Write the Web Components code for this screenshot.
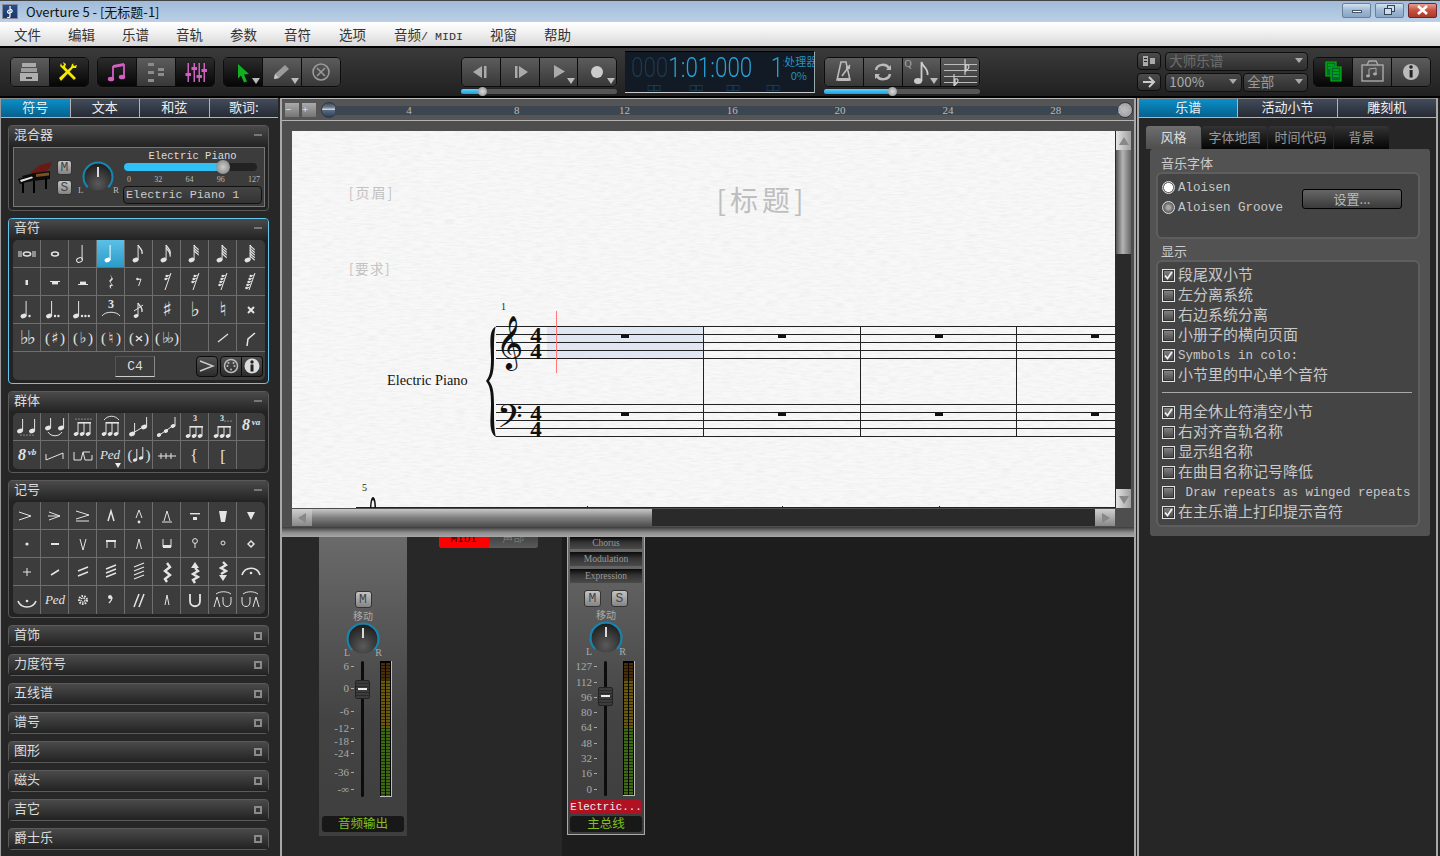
<!DOCTYPE html>
<html>
<head>
<meta charset="utf-8">
<title>Overture 5</title>
<style>
html, body { margin: 0; height: 100%; background: #262626; overflow: hidden; }
body { font-family: "Noto Sans CJK SC", "Noto Sans", sans-serif; }
</style>
</head>
<body>
<ov-app></ov-app>
<script>
(function() {
    "use strict";

    const CJK = '"Noto Sans CJK SC", "Noto Sans", sans-serif';
    const MONO = '"Liberation Mono", "Noto Sans CJK SC", monospace';
    const SERIF = '"Liberation Serif", "Noto Sans CJK SC", serif';
    const MUSIC = '"DejaVu Sans", sans-serif';

    const svg = (w, h, inner, vb) => `<svg xmlns="http://www.w3.org/2000/svg" width="${w}" height="${h}" viewBox="${vb || `0 0 ${w} ${h}`}" style="display:block">${inner}</svg>`;
    const ln = (a, b, c, d, w, col) => `<line x1="${a}" y1="${b}" x2="${c}" y2="${d}" stroke="${col || 'currentColor'}" stroke-width="${w || 1}"/>`;
    const pl = (pts, w) => `<polyline points="${pts}" fill="none" stroke="currentColor" stroke-width="${w || 1}"/>`;
    const pg = (pts, col) => `<polygon points="${pts}" fill="${col || 'currentColor'}"/>`;
    const rc = (x, y, w, h, col) => `<rect x="${x}" y="${y}" width="${w}" height="${h}" fill="${col || 'currentColor'}"/>`;
    const tx = (s, x, y, size, fam, extra) => `<text x="${x}" y="${y}" font-size="${size}" font-family='${fam || MUSIC}' fill="currentColor" text-anchor="middle" ${extra || ''}>${s}</text>`;

    // a note head with stem and flags, all palette symbols are built from this
    function note(o) {
        const x = o.x === undefined ? 10.5 : o.x, y = o.y === undefined ? 20 : o.y, h = o.h || 15;
        const rx = o.rx || 3, ry = o.ry || 2.2;
        let s = o.open
            ? `<ellipse cx="${x}" cy="${y}" rx="${rx}" ry="${ry}" transform="rotate(-20 ${x} ${y})" fill="none" stroke="currentColor"/>`
            : `<ellipse cx="${x}" cy="${y}" rx="${rx}" ry="${ry}" transform="rotate(-20 ${x} ${y})" fill="currentColor"/>`;
        if (!o.nostem) s += ln(x + rx - .4, y, x + rx - .4, y - h, 1);
        for (let i = 0; i < (o.flags || 0); i++) {
            const fy = y - h + i * 2.6, sx = x + rx - .4;
            s += `<path d="M${sx} ${fy}c1 3 5 4 4 ${o.flags > 2 ? 5 : 9}" fill="none" stroke="currentColor" stroke-width="1.2"/>`;
        }
        for (let i = 0; i < (o.dots || 0); i++) s += `<circle cx="${x + 6 + i * 3.4}" cy="${y}" r="1.2" fill="currentColor"/>`;
        return s;
    }
    const restFlag = n => {
        const sx = y => 18 - (y - 5) * 6 / 17;
        let s = ln(18, 5, 12, 22, 1);
        for (let i = 0; i < n; i++) {
            const y = 8 + i * 3;
            s += `<circle cx="${sx(y) - 3.2}" cy="${y}" r="1.3" fill="currentColor"/>` + ln(sx(y) - 3, y + .4, sx(y), y - 1, 1);
        }
        return s;
    };
    const paren = (inner, x1, x2) => tx('(', x1 || 6.5, 19, 15, SERIF) + inner + tx(')', x2 || 21.5, 19, 15, SERIF);
    const acc = (g, x, y, size) => tx(g, x || 14, y || 20, size || 20);
    const ff = (size, x, y) => tx('♭♭', x || 14, y || 20, size, MUSIC, 'letter-spacing="-2"');
    const beams = (xs, y, h, extra) => xs.map(x => note({ x: x, y: y, h: h, rx: 2.4, ry: 1.8 })).join('') + rc(xs[0] + 2, y - h, xs[xs.length - 1] - xs[0] + 1, 1.6) + (extra || '');
    const dotted = (x1, x2, y) => { let s = ''; for (let x = x1; x <= x2; x += 3) s += `<circle cx="${x}" cy="${y}" r=".6" fill="currentColor"/>`; return s; };

    const NOTES = [
        ln(6, 11, 6, 17) + ln(8, 11, 8, 17) + ln(20, 11, 20, 17) + ln(22, 11, 22, 17) + `<ellipse cx="14" cy="14" rx="3.6" ry="2" fill="none" stroke="currentColor" stroke-width="1.5"/>`,
        `<ellipse cx="14" cy="14" rx="3.4" ry="2" fill="none" stroke="currentColor" stroke-width="1.6"/>`,
        note({ open: 1 }), note({}), note({ flags: 1 }), note({ flags: 2 }), note({ flags: 3 }), note({ flags: 4 }), note({ flags: 5 }),
        rc(12.5, 12, 2.5, 5), rc(9, 13, 10, 1) + rc(11, 14, 6, 2.4), rc(9, 16, 10, 1) + rc(11, 13.6, 6, 2.4),
        `<path d="M13 6l3 5-2.6 3 3 4c-2-.6-3.4 0-2 3-3-2-2-5 .4-4l-2.6-4 2.4-3z" fill="currentColor"/>`,
        `<circle cx="12.4" cy="11" r="1.2" fill="currentColor"/>` + ln(12.4, 11.6, 16, 11, 1) + ln(16, 11, 13.6, 18, 1),
        restFlag(2), restFlag(3), restFlag(4), restFlag(5),
        note({ dots: 1 }), note({ x: 8, dots: 2 }), note({ x: 7, dots: 3 }),
        tx('3', 14, 12, 12, SERIF, 'font-weight="bold"') + `<path d="M5 20c3-5 15-5 18 0" fill="none" stroke="currentColor"/>`,
        note({ x: 11, y: 20, h: 13, rx: 2.4, ry: 1.8, flags: 1 }) + ln(9, 15, 18, 9),
        acc('♯'), acc('♭'), acc('♮'),
        ln(11, 11, 17, 17, 2) + ln(17, 11, 11, 17, 2),
        ff(19), paren(acc('♯', 14, 19, 15)), paren(acc('♭', 14, 19, 15)), paren(acc('♮', 14, 19, 15)),
        paren(ln(11, 12, 17, 17, 1.5) + ln(17, 12, 11, 17, 1.5)), tx('(', 4.5, 19, 15, SERIF) + ff(15, 14, 19) + tx(')', 23.5, 19, 15, SERIF), '',
        ln(9, 18, 19, 10, 1.3),
        `<path d="M10 22l1-7 7-6" fill="none" stroke="currentColor" stroke-width="1.5"/>`,
    ];
    const GROUPS = [
        note({ x: 7, y: 18, h: 12 }) + note({ x: 19, y: 18, h: 12 }) + dotted(8, 20, 22),
        note({ x: 7, y: 15, h: 10 }) + note({ x: 20, y: 15, h: 10 }) + `<path d="M7 19c3 5 11 5 14 0" fill="none" stroke="currentColor"/>`,
        beams([7, 13, 19], 21, 12) + dotted(7, 22, 6),
        beams([7, 13, 19], 21, 12) + `<path d="M7 7c4-5 11-5 15 0" fill="none" stroke="currentColor"/>`,
        note({ x: 7, y: 21, h: 11 }) + note({ x: 19, y: 14, h: 10 }) + ln(8, 20, 18, 14),
        note({ x: 6, y: 22, h: 6, rx: 2.2, ry: 1.8, nostem: 1 }) + note({ x: 13, y: 18, h: 6, rx: 2.2, ry: 1.8, nostem: 1 }) + note({ x: 20, y: 13, h: 9, rx: 2.4, ry: 1.8 }) + ln(5, 23, 21, 12),
        tx('3', 14, 8, 8, SERIF, 'font-weight="bold"') + beams([7, 13, 19], 23, 10),
        tx('3', 13, 8, 8, SERIF, 'font-weight="bold"') + dotted(16, 22, 8) + beams([7, 13, 19], 23, 10),
        tx('8', 9, 17, 16, SERIF, 'font-weight="bold" font-style="italic"') + tx('va', 19, 12, 9, SERIF, 'font-weight="bold" font-style="italic"'),
        tx('8', 9, 19, 16, SERIF, 'font-weight="bold" font-style="italic"') + tx('vb', 19, 14, 9, SERIF, 'font-weight="bold" font-style="italic"'),
        pl('5,13 5,19 22,12 22,18'),
        pl('5,11 5,19 12,19 14,11 21,11') + pl('14,11 16,19 23,19 23,14'),
        tx('Ped', 13, 18, 13, SERIF, 'font-style="italic"') + pg('18,22 24,22 21,27', '#eee'),
        paren(note({ x: 10, y: 19, h: 11, rx: 2.2, ry: 1.7 }) + note({ x: 16, y: 17, h: 11, rx: 2.2, ry: 1.7 }), 5, 23),
        pl('5,15 23,15') + pl('8,12 8,18') + pl('13,12 13,18') + pl('18,12 18,18'),
        tx('{', 13, 20, 16, SERIF), tx('[', 14, 21, 16, SERIF), '',
    ];
    const MARKS = [
        pl('6,10 18,14 6,18'),
        pl('8,10 19,14 8,18') + ln(7, 14, 19, 14),
        pl('7,9 20,13 7,17') + ln(7, 19, 20, 19),
        pl('11,19 14,9 17,19', 1.5),
        pl('11,16 14,8 17,16') + `<circle cx="14" cy="20" r="1.4" fill="currentColor"/>`,
        pl('11,19 14,9 17,19', 1) + ln(9, 20, 19, 20),
        rc(9, 11, 10, 1.4) + rc(12, 15, 4, 3),
        pg('10,9 18,9 16,20 12,20'),
        pg('10,10 18,10 14,18'),
        `<circle cx="14" cy="14" r="1.6" fill="currentColor"/>`,
        rc(10, 13, 8, 2),
        pl('11,9 14,20 17,9'),
        rc(9, 10, 10, 2) + pl('10,12 10,18') + pl('18,12 18,18') + rc(9, 10, 10, 2),
        pl('11.5,19 14,9 16.5,19'),
        pl('10,9 10,17 18,17 18,9') + rc(10, 15, 8, 3),
        `<circle cx="14" cy="11" r="2.4" fill="none" stroke="currentColor"/>` + ln(14, 13, 14, 18),
        `<circle cx="14" cy="13" r="2" fill="none" stroke="currentColor"/>`,
        pg('14,10 18,14 14,18 10,14') + pg('14,12 16,14 14,16 12,14', '#3c3c3c'),
        ln(10, 14, 18, 14) + ln(14, 10, 14, 18),
        ln(10, 17, 18, 12, 1.5),
        ln(9, 13, 19, 9, 1.5) + ln(9, 18, 19, 14, 1.5),
        ln(9, 11, 19, 7, 1.4) + ln(9, 15, 19, 11, 1.4) + ln(9, 19, 19, 15, 1.4),
        ln(9, 9, 19, 5, 1.3) + ln(9, 13, 19, 9, 1.3) + ln(9, 17, 19, 13, 1.3) + ln(9, 21, 19, 17, 1.3),
        pl('14,5 17,9 12,13 17,17 12,21 14,24', 2.4),
        pg('14,4 18,10 10,10') + pl('14,10 17,13 12,16 17,19 12,22 14,25', 2.4),
        pl('14,4 17,7 12,10 17,13 12,16', 2.4) + pg('14,23 18,17 10,17'),
        `<path d="M5 17c3-9 15-9 18 0" fill="none" stroke="currentColor" stroke-width="1.6"/><circle cx="14" cy="15" r="1.3" fill="currentColor"/>`,
        `<path d="M5 15c3 8 15 8 18 0" fill="none" stroke="currentColor" stroke-width="1.6"/><circle cx="14" cy="15" r="1.3" fill="currentColor"/>`,
        tx('Ped', 14, 18, 13, SERIF, 'font-style="italic"'),
        `<circle cx="14" cy="14" r="2" fill="none" stroke="currentColor" stroke-width="1.4" stroke-dasharray="1.4 .8"/><circle cx="14" cy="14" r="4" fill="none" stroke="currentColor" stroke-width="2" stroke-dasharray="1.6 1.2"/>`,
        `<circle cx="13" cy="11" r="2" fill="currentColor"/><path d="M15 11c0 4-2 5-3 6" fill="none" stroke="currentColor" stroke-width="1.4"/>`,
        ln(9, 21, 14, 8, 1.5) + ln(14, 21, 19, 8, 1.5),
        pl('12,19 14,9 16,19'),
        `<path d="M9 8v7c0 7 10 7 10 0V8" fill="none" stroke="currentColor" stroke-width="1.8"/>`,
        pl('5,21 8,11 11,21') + `<path d="M14 11v5c0 6 8 6 8 0v-5" fill="none" stroke="currentColor"/><path d="M7 8c4-3 11-3 15 0" fill="none" stroke="currentColor"/>`,
        `<path d="M5 11v5c0 6 8 6 8 0v-5" fill="none" stroke="currentColor"/>` + pl('16,21 19,11 22,21') + `<path d="M6 8c4-3 11-3 15 0" fill="none" stroke="currentColor"/>`,
    ];

    const TOOL = {
        tray: `<rect x="11" y="6" width="14" height="4" fill="#aaa"/><rect x="10" y="11" width="16" height="4" fill="#9c9c9c"/><rect x="9" y="16" width="18" height="8" fill="#b0b0b0"/><rect x="15" y="20" width="6" height="2" fill="#444"/>`,
        tools: `<path d="M11 6l-1 3 3 3 11 11 2-2L15 10l1-3-3-2 1 3-2 1z" fill="#f5e800"/><path d="M26 6l-4 1-1 3-12 11 2 3 12-13 3 0 1-3-3 1-1-2z" fill="#f5e800"/>`,
        music: `<path d="M15 9v13M26 7v12" stroke="#d460c4" stroke-width="1.800"/><path d="M15 8l11-2v3l-11 2z" fill="#d460c4"/><ellipse cx="13" cy="22" rx="3.200" ry="2.300" fill="#d460c4"/><ellipse cx="24" cy="20" rx="3.200" ry="2.300" fill="#d460c4"/>`,
        blocks: `<rect x="11" y="6" width="6" height="3" fill="#8c8c8c"/><rect x="11" y="14" width="6" height="3" fill="#8c8c8c"/><rect x="11" y="22" width="6" height="3" fill="#8c8c8c"/><rect x="21" y="11" width="6" height="3" fill="#8c8c8c"/><rect x="21" y="16" width="6" height="3" fill="#8c8c8c"/>`,
        faders: [12, 18, 23, 28].map((x, i) => `<rect x="${x - .5}" y="6" width="1.500" height="19" fill="#d060c0"/><rect x="${x - 2.500}" y="${[16, 10, 18, 12][i]}" width="5.500" height="3" fill="#d060c0"/>`).join(''),
        arrow: `<path d="M14 7l11 10-5 .5 3 7-3 1-3-7-3 3z" fill="#10b020"/>`,
        pencil: `<path d="M11 22l1-5 10-9 4 4-10 9z" fill="#9a9a9a"/><path d="M11 22l1-5 4 4z" fill="#c8c8c8"/>`,
        cross: `<circle cx="19" cy="15" r="8" fill="none" stroke="#9a9a9a" stroke-width="1.6"/><path d="M15 11l8 8M23 11l-8 8" stroke="#9a9a9a" stroke-width="1.6"/>`,
        prev: `<path d="M20 9v12l-9-6z" fill="#aaa"/><rect x="22" y="9" width="2.5" height="12" fill="#aaa"/>`,
        next: `<rect x="14" y="9" width="2.5" height="12" fill="#aaa"/><path d="M18 9v12l9-6z" fill="#aaa"/>`,
        play: `<path d="M14 8v13l11-6.500z" fill="#aaa"/>`,
        rec: `<circle cx="19" cy="15" r="6" fill="#ccc"/>`,
        metro: `<path d="M16 5h5l4 18H12z" fill="none" stroke="#bbb" stroke-width="1.600"/><path d="M13 21h11v3H13z" fill="#bbb"/><path d="M17 19l8-11" stroke="#bbb" stroke-width="1.600"/><rect x="21" y="9" width="4" height="3" fill="#bbb"/>`,
        loop: `<path d="M12 13c1-6 10-7 13-2M26 17c-1 6-10 7-13 2" fill="none" stroke="#bbb" stroke-width="2.500"/><path d="M22 13l5 0 0-5zM16 17l-5 0 0 5z" fill="#bbb"/>`,
        qnote: `<ellipse cx="15" cy="24" rx="4" ry="3" fill="#ccc"/><path d="M18.500 24V5c1 5 7 6 6 13" fill="none" stroke="#ccc" stroke-width="1.800"/>`,
        staff: [7, 13, 19, 25].map(y => `<rect x="3" y="${y}" width="33" height="1" fill="#bbb"/>`).join('') + `<path d="M24 2v16M25 8c4-1 4 3 0 6zM13 17v12M14 22c4-1 4 3 0 6z" fill="none" stroke="#ccc" stroke-width="1.200"/>`,
        green: `<path d="M12 5h10v14H12z" fill="#063" stroke="#0b0" stroke-width="1.200"/><path d="M17 10h10v14H17z" fill="#063" stroke="#0b0" stroke-width="1.200"/><path d="M14 8h6M14 11h2M19 13h6M19 16h6M19 19h6" stroke="#0d0" stroke-width="1.200"/>`,
        bag: `<rect x="9" y="8" width="21" height="16" fill="none" stroke="#aaa" stroke-width="1.400"/><path d="M14 8l2-4h7l2 4" fill="none" stroke="#aaa" stroke-width="1.400"/><path d="M16 19v-7l7-1v6" fill="none" stroke="#aaa"/><ellipse cx="15" cy="19" rx="2" ry="1.400" fill="#aaa"/><ellipse cx="22" cy="17" rx="2" ry="1.400" fill="#aaa"/>`,
        info: `<circle cx="19" cy="15" r="8" fill="#bbb"/><rect x="17.600" y="13" width="3" height="7.500" fill="#222"/><circle cx="19" cy="10" r="1.800" fill="#222"/>`,
    };

    const define = (name, cls) => window.customElements.define(name, cls);

    class OvElement extends HTMLElement {
        constructor() {
            super();
            this.attachShadow({mode: 'open'});
        }
        connectedCallback() {
            this.shadowRoot.innerHTML = this.render();
        }
        attr(name, dflt) {
            return this.hasAttribute(name) ? this.getAttribute(name) : dflt;
        }
    }

    define('ov-titlebar', class extends OvElement {
        render() {
            const wb = (bg, inner, border) => `<div class="wb" style="background:${bg};border-color:${border}">${inner}</div>`;
            return `<style>
                :host { display: flex; align-items: center; height: 22px; box-sizing: border-box; border-top: 1px solid #444;
                    background: linear-gradient(#9fbbd9, #bcd0e6); font: 13px ${CJK}; color: #111; }
                .logo { width: 16px; height: 15px; margin: 0 8px 0 2px; background: linear-gradient(#27508c, #1a3668); color: #fff; border: 1px solid #889; box-sizing: border-box; }
                .t { flex: 1; white-space: pre; }
                .btns { display: flex; gap: 4px; margin-right: 3px; margin-top: -3px; }
                .wb { width: 29px; height: 15px; box-sizing: border-box; border: 1px solid; border-radius: 2px; display: flex; align-items: center; justify-content: center; }
            </style>
            <div class="logo">${svg(14, 13, '<path d="M7 1v10c0 2-2 2-2.500 1M7 4c3 1 3 3 0 4-3 1-3-2-1-3" fill="none" stroke="#fff" stroke-width="1.200"/>')}</div>
            <div class="t">Overture 5 - [无标题-1]</div>
            <div class="btns">
                ${wb('linear-gradient(#d4e2f0,#9fb9d4 50%,#8aa6c4)', '<div style="width:10px;height:3px;background:#fff;border:1px solid #456;box-sizing:border-box;margin-top:3px"></div>', '#6d7f94')}
                ${wb('linear-gradient(#d4e2f0,#9fb9d4 50%,#8aa6c4)', svg(13, 11, '<rect x="4.500" y=".5" width="7" height="6" fill="#cde" stroke="#345"/><rect x="1.500" y="3.500" width="7" height="6" fill="#cde" stroke="#345"/>'), '#6d7f94')}
                ${wb('linear-gradient(#e0a090,#c8503c 50%,#a83a2a)', svg(13, 10, '<path d="M2 1l9 8M11 1l-9 8" stroke="#fff" stroke-width="2.600"/>'), '#6a2530')}
            </div>`;
        }
    });

    define('ov-menubar', class extends OvElement {
        render() {
            const items = ['文件', '编辑', '乐谱', '音轨', '参数', '音符', '选项', '音频<i>/ MIDI</i>', '视窗', '帮助'];
            return `<style>
                :host { display: flex; align-items: center; gap: 27px; height: 24px; padding-left: 14px;
                    background: linear-gradient(#fff, #f2f2f2 40%, #d8d8d8); font: 13.500px ${CJK}; color: #333; }
                span { white-space: pre; }
                i { font: normal 11.700px ${MONO}; }
                span:nth-child(8) { margin-left: 1px; }
                span:nth-child(9) { margin-left: 1px; }
            </style>${items.map(i => `<span>${i}</span>`).join('')}`;
        }
    });

    define('ov-tool-group', class extends OvElement {
        render() {
            return `<style>
                :host { display: flex; height: 30px; box-sizing: border-box; border: 1px solid #0c0c0c; border-radius: 5px; overflow: hidden; box-shadow: 0 0 0 1px #3a3a3a44; flex: none; }
            </style><slot></slot>`;
        }
    });

    define('ov-tool-btn', class extends OvElement {
        render() {
            const on = this.hasAttribute('on');
            const drop = this.hasAttribute('drop') ? `<div class="d"></div>` : '';
            const q = this.hasAttribute('q') ? `<div class="q">Q</div>` : '';
            return `<style>
                :host { display: block; position: relative; width: 38.670px; height: 28px; box-sizing: border-box; flex: none; overflow: hidden;
                    background: ${on ? 'linear-gradient(#2c2c2c,#060606)' : 'linear-gradient(#5c5c5c,#383838)'}; border-right: 1px solid #0c0c0c; }
                :host(:last-child) { border-right: 0; }
                svg { margin-top: -1px; }
                .d { position: absolute; right: 2px; bottom: 2px; width: 0; height: 0; border: 4px solid transparent; border-top: 6px solid #bbb; border-bottom: 0; }
                .q { position: absolute; left: 2px; top: 0; font: 10px ${SERIF}; color: #aaa; }
            </style>${svg(38, 30, TOOL[this.attr('icon')] || '')}${drop}${q}`;
        }
    });

    define('ov-slider', class extends OvElement {
        render() {
            return `<style>
                :host { display: block; position: relative; height: 7px; margin-top: 0; }
                .tr { position: absolute; left: 0; right: 0; top: 1px; height: 5px; background: #555; border-radius: 3px; }
                .f { height: 100%; width: ${this.attr('pos')}px; background: linear-gradient(#5ed0ff, #18a0e0); border-radius: 3px; }
                .th { position: absolute; left: ${+this.attr('pos') - 4}px; top: -1px; width: 9px; height: 9px; border-radius: 50%; background: radial-gradient(#ddd, #888); }
            </style><div class="tr"><div class="f"></div></div><div class="th"></div>`;
        }
    });

    define('ov-combo', class extends OvElement {
        render() {
            return `<style>
                :host { display: flex; align-items: center; box-sizing: border-box; height: 19px; border: 1px solid #0e0e0e; border-radius: 4px; padding-left: 3px; flex: none;
                    background: linear-gradient(#484848, #2e2e2e); color: ${this.attr('color', '#aaa')}; font: 13.500px/17px ${CJK}; width: ${this.attr('w')}px; position: relative; }
                .a { position: absolute; right: 4px; top: 5px; border: 4.500px solid transparent; border-top: 5px solid #aaa; border-bottom: 0; }
                .l { margin-top: -2px; }
            </style><span class="l"><slot></slot></span><div class="a"></div>`;
        }
    });

    define('ov-time-display', class extends OvElement {
        render() {
            return `<style>
                :host { display: block; width: 190px; height: 42px; box-sizing: border-box; flex: none; position: relative; background: #111a25; overflow: hidden;
                    border-right: 1px solid #9aa; border-bottom: 1px solid #ccc; border-top: 1px solid #000; color: #29a1d6; }
                .d { display: flex; align-items: baseline; padding: 0 0 0 6px; font: 300 28px Roboto, sans-serif; line-height: 31px; height: 31px; white-space: pre; transform: scaleX(.8); transform-origin: 6px 0; width: 230px; }
                .dim { color: #1c3a50; }
                .sub { display: flex; font: 8px ${MUSIC}; color: #1f5570; height: 9px; padding-left: 22px; letter-spacing: -1px; }
                .sub span:nth-child(1) { width: 42px; } .sub span:nth-child(2) { width: 37px; } .sub span:nth-child(3) { width: 40px; }
                .side { position: absolute; left: 158px; top: 2px; width: 31px; overflow: hidden; font: 11px ${CJK}; line-height: 14px; white-space: nowrap; text-align: center; color: #2a8fb8; }
            </style>
            <div class="d"><span class="dim">000</span><span>1</span><span>:</span><span>01</span><span>:</span><span>000</span><span style="margin-left:23px">1</span></div>
            <div class="side"><div style="margin-left:-2px">:处理器</div><div>0%</div></div>
            <div class="sub"><span>□□</span><span>□□</span><span>□□</span><span>□□</span></div>`;
        }
    });

    define('ov-toolbar', class extends OvElement {
        render() {
            const b = (icon, extra) => `<ov-tool-btn icon="${icon}" ${extra || ''}></ov-tool-btn>`;
            const mini = (inner) => `<div class="mini">${inner}</div>`;
            return `<style>
                :host { display: flex; height: 52px; box-sizing: border-box; border-top: 2px solid #000; border-bottom: 2px solid #000; background: linear-gradient(#3a3a3a, #202020); padding-left: 10px; }
                .top { align-self: flex-start; margin-top: 9px; }
                .stack { margin-top: 9px; display: flex; flex-direction: column; width: 156px; gap: 1px; flex: none; }
                .stack ov-tool-group { width: 100%; }
                .mini { width: 24px; height: 18px; box-sizing: border-box; border: 1px solid #0e0e0e; border-radius: 4px; background: linear-gradient(#4c4c4c, #2e2e2e); display: flex; align-items: center; justify-content: center; }
                .col { display: flex; flex-direction: column; gap: 3px; margin-top: 4px; }
                .row { display: flex; gap: 1px; }
            </style>
            <ov-tool-group class="top">${b('tray')}${b('tools', 'on')}</ov-tool-group>
            <ov-tool-group class="top" style="margin-left:8px">${b('music', 'on')}${b('blocks')}${b('faders', 'on')}</ov-tool-group>
            <ov-tool-group class="top" style="margin-left:8px">${b('arrow', 'on drop')}${b('pencil', 'drop')}${b('cross')}</ov-tool-group>
            <div class="stack" style="margin-left:120px">
                <ov-tool-group>${b('prev')}${b('next')}${b('play', 'drop')}${b('rec', 'drop')}</ov-tool-group>
                <ov-slider pos="21"></ov-slider>
            </div>
            <ov-time-display style="margin:3px 0 0 8px"></ov-time-display>
            <div class="stack" style="margin-left:9px">
                <ov-tool-group>${b('metro')}${b('loop')}${b('qnote', 'drop q')}${b('staff')}</ov-tool-group>
                <ov-slider pos="68"></ov-slider>
            </div>
            <div class="col" style="margin-left:157px">
                ${mini(svg(14, 10, '<rect x="1" y="0" width="5" height="10" fill="#aaa"/><rect x="8" y="2" width="5" height="6" fill="#aaa"/><rect x="2" y="2" width="3" height="1" fill="#222"/><rect x="2" y="5" width="3" height="1" fill="#222"/>'))}
                ${mini(svg(14, 12, '<path d="M1 6h10M7 1l5 5-5 5" fill="none" stroke="#ccc" stroke-width="2"/>'))}
            </div>
            <div class="col" style="margin-left:4px;gap:2px">
                <ov-combo w="143" color="#6e6e6e">大师乐谱</ov-combo>
                <div class="row"><ov-combo w="77" color="#aaa">100%</ov-combo><ov-combo w="65" color="#999">全部</ov-combo></div>
            </div>
            <ov-tool-group class="top" style="margin-left:5px">${b('green', 'on')}${b('bag')}${b('info')}</ov-tool-group>`;
        }
    });

    define('ov-tabs', class extends OvElement {
        render() {
            const tabs = this.attr('tabs').split('|');
            return `<style>
                :host { display: flex; height: 20px; box-sizing: border-box; border-bottom: 1px solid #b4b4b4; border-top: 1px solid #8a8a8a; color: #eee; font: 13px/15px ${CJK}; background: #111; }
                div { flex: 1; text-align: center; border-right: 1px solid #b4b4b4; background: linear-gradient(#434c5c, #262a33); }
                div:last-child { border-right: 0; }
                div.on { background: linear-gradient(#0a8fc8, #07608e); }
            </style>${tabs.map((t, i) => `<div class="${i === 0 ? 'on' : ''}">${t}</div>`).join('')}`;
        }
    });

    define('ov-panel', class extends OvElement {
        render() {
            const collapsed = this.hasAttribute('collapsed');
            const sel = this.hasAttribute('selected');
            const ic = collapsed
                ? `<div style="border:2px solid #8a8a8a;width:4px;height:4px;margin-top:5px"></div>`
                : `<div style="width:8px;height:2px;background:#777;margin-top:3px"></div>`;
            return `<style>
                :host { display: block; box-sizing: border-box; border: 1px solid ${sel ? '#62c6ee' : '#5a5a5a'}; border-radius: 4px; flex: none; height: ${this.attr('h', 22)}px;
                    background: ${collapsed ? 'linear-gradient(#4a4a4a,#222)' : '#232323'}; }
                .h { height: ${collapsed ? 20 : 21}px; display: flex; align-items: center; justify-content: space-between; padding: 0 6px 6px 5px; box-sizing: border-box; color: #ddd; font: 13px ${CJK}; letter-spacing: 0;
                    background: linear-gradient(#4a4a4a, #222); border-radius: 3px 3px 0 0; }
                .b { padding: 0 3px 0 4px; }
            </style>
            <div class="h"><span>${this.attr('title')}</span>${ic}</div>
            ${collapsed ? '' : '<div class="b"><slot></slot></div>'}`;
        }
    });

    define('ov-palette', class extends OvElement {
        render() {
            const sets = { notes: NOTES, groups: GROUPS, marks: MARKS };
            const list = sets[this.attr('set')];
            const active = +this.attr('active', -1);
            const n = Math.ceil(list.length / 9);
            return `<style>
                :host { display: grid; grid-template-columns: repeat(9, 28px); grid-auto-rows: 28px; width: 252px; background: #3c3c3c; border-radius: 5px; overflow: hidden; color: #e4e4e4; }
                .c { box-sizing: border-box; border-right: 1px solid #6e6e6e; border-bottom: 1px solid #6e6e6e; }
                .c.edge { border-right: 0; }
                .c.last { ${this.hasAttribute('noedge') ? '' : 'border-bottom: 0;'} }
                .c.on { background: linear-gradient(#5cc0e6, #2a9cc8); color: #fff; }
            </style>${list.map((s, i) => `<div class="c ${i === active ? 'on' : ''} ${i >= (n - 1) * 9 ? 'last' : ''} ${i % 9 === 8 ? 'edge' : ''}">${svg(28, 28, s)}</div>`).join('')}<slot></slot>`;
        }
    });

    define('ov-note-foot', class extends OvElement {
        render() {
            const box = `border:1px solid #0c0c0c;border-radius:4px;background:linear-gradient(#505050,#2c2c2c);height:21px;box-sizing:border-box;display:flex;align-items:center;justify-content:center;`;
            return `<style>
                :host { grid-column: 1 / -1; display: flex; align-items: center; height: 28px; padding-left: 102px; }
                .c4 { width: 40px; height: 21px; box-sizing: border-box; text-align: center; font: 13px/19px ${MONO}; color: #ddd; border: 1px solid #555; border-bottom-color: #ccc; border-right-color: #888; }
            </style>
            <div class="c4">C4</div>
            <div style="${box}width:22px;margin-left:41px">${svg(18, 14, '<path d="M2 2l13 5-13 5" fill="none" stroke="#ccc" stroke-width="1.400"/>')}</div>
            <div style="display:flex;margin-left:2px">
                <div style="${box}width:22px;border-radius:4px 0 0 4px">${svg(16, 16, '<circle cx="8" cy="8" r="6.500" fill="none" stroke="#bbb" stroke-width="1.500"/><circle cx="4.500" cy="8" r="1" fill="#bbb"/><circle cx="11.500" cy="8" r="1" fill="#bbb"/><circle cx="8" cy="11.500" r="1" fill="#bbb"/><circle cx="5.500" cy="5" r="1" fill="#bbb"/><circle cx="10.500" cy="5" r="1" fill="#bbb"/>')}</div>
                <div style="${box}width:21px;border-radius:0 4px 4px 0;border-left:0">${svg(16, 16, '<circle cx="8" cy="8" r="7.500" fill="#ddd"/><rect x="6.500" y="6.500" width="3" height="7" fill="#222"/><circle cx="8" cy="4" r="1.700" fill="#222"/>')}</div>
            </div>`;
        }
    });

    define('ov-knob', class extends OvElement {
        render() {
            const s = +this.attr('size', 34), c = s / 2, r = c - 1.500;
            const x = r * Math.sin(Math.PI * .75), d = `M${c - x} ${c + x}A${r} ${r} 0 1 1 ${c + x} ${c + x}`;
            return `<style>:host { display: block; width: ${s}px; height: ${s}px; flex: none; }</style>` +
                svg(s, s, `<defs><radialGradient id="g" cx=".5" cy=".75" r=".75"><stop offset="0" stop-color="#5a5a5a"/><stop offset=".7" stop-color="#303030"/><stop offset="1" stop-color="#1c1c1c"/></radialGradient></defs>
                <circle cx="${c}" cy="${c}" r="${r - 1}" fill="url(#g)"/><path d="${d}" fill="none" stroke="#1586b0" stroke-width="2"/><rect x="${c - 1}" y="6" width="2" height="10" fill="#d8d8d8"/>`);
        }
    });

    define('ov-sq', class extends OvElement {
        render() {
            const w = this.attr('w', 15), h = this.attr('h', 15);
            return `<style>:host { display: block; width: ${w}px; height: ${h}px; box-sizing: border-box; text-align: center; border-radius: 3px; border: 1px solid #333; flex: none;
                background: linear-gradient(#c4c4c4, #848484); color: #444; font: 13px/${h - 2}px ${MONO}; }</style><slot></slot>`;
        }
    });

    define('ov-mixer-head', class extends OvElement {
        render() {
            const piano = `<path d="M14 14l10-8 12-3-3 7-8 5z" fill="#6a1a14"/><path d="M6 17l12-3 16-2v8L9 23z" fill="#0c0c0c"/><path d="M20 15l13-1.500v3L20 18z" fill="#7a5020"/><path d="M2 20l14-4 3 1v4L4 25z" fill="#0c0c0c"/><path d="M4 21l12-3.500 1 1.500-12 4z" fill="#e4e4e4"/><path d="M7 24v10M18 22v12M30 19v11" stroke="#000" stroke-width="2"/>`;
            const scale = ['0', '32', '64', '96', '127'];
            return `<style>
                :host { display: flex; height: 60px; box-sizing: border-box; border: 1px solid #777; background: #3c3c3c; position: relative; font: 8px ${SERIF}; color: #bbb; }
                .ms { display: flex; flex-direction: column; gap: 5px; margin: 12px 0 0 5px; }
                .kb { position: relative; width: 44px; margin-left: 4px; padding-top: 13px; box-sizing: border-box; display: flex; justify-content: center; }
                .lr { position: absolute; top: 37px; font-size: 9px; } 
                .r { width: 139px; margin-left: 3px; }
                .name { text-align: center; font: 10.500px/14px ${MONO}; color: #ddd; margin-top: 1px; height: 14px; }
                .track { position: relative; height: 8px; margin: 0 5px 0 1px; border-radius: 4px; background: #222; }
                .fill { width: 99px; height: 100%; background: #2fc0f5; border-radius: 4px 0 0 4px; }
                .thumb { position: absolute; left: 92px; top: -3px; width: 14px; height: 14px; border-radius: 50%; background: radial-gradient(#ccc, #777); }
                .sc { display: flex; justify-content: space-between; padding: 4px 2px 0 4px; height: 10px; line-height: 10px; }
                .combo { height: 18px; margin-top: 1px; box-sizing: border-box; border: 1px solid #111; border-radius: 4px; background: linear-gradient(#454545, #333); color: #ccc; font: 11.800px/16px ${MONO}; padding-left: 2px; white-space: nowrap; }
            </style>
            <div style="margin:11px 0 0 2px;width:36px">${svg(36, 38, piano)}</div>
            <div class="ms"><ov-sq>M</ov-sq><ov-sq>S</ov-sq></div>
            <div class="kb"><ov-knob size="32"></ov-knob><span class="lr" style="left:2px">L</span><span class="lr" style="right:1px">R</span></div>
            <div class="r">
                <div class="name">Electric Piano</div>
                <div class="track"><div class="fill"></div><div class="thumb"></div></div>
                <div class="sc">${scale.map(s => `<span>${s}</span>`).join('')}</div>
                <div class="combo">Electric Piano 1</div>
            </div>`;
        }
    });

    define('ov-ruler', class extends OvElement {
        render() {
            const labels = [4, 8, 12, 16, 20, 24, 28];
            const ball = (bg, t) => `<div style="width:14px;height:14px;border-radius:50%;background:${bg};border:1px solid #334;flex:none;font:9px/12px ${SERIF};text-align:center;color:#666;position:relative;box-sizing:border-box">${t || ''}</div>`;
            const sq = t => `<div style="width:14px;height:14px;background:linear-gradient(#aaa,#757575);color:#f4f4f4;font:bold 13px/13px ${MUSIC};text-align:center">${t}</div>`;
            return `<style>
                :host { display: flex; align-items: center; height: 23px; box-sizing: border-box; border-top: 1px solid #bbb; border-bottom: 1px solid #b4b4b4; background: #555; padding-left: 3px; color: #bbb; font: 11px ${SERIF}; }
                .track { flex: 1; display: flex; height: 9px; margin: 1px 0 0 -2px; background: #3c4650; line-height: 9px; padding-left: 20px; }
                .track span { width: 107.800px; text-align: center; flex: none; }
            </style>
            ${sq('−')}<div style="width:3px"></div>${sq('+')}<div style="width:5px"></div>${ball('linear-gradient(#3a4a5a,#6a7a8a 30%,#d0d8e0 48%,#5a6a80 52%,#27405a)')}
            <div class="track">${labels.map(l => `<span>${l}</span>`).join('')}</div>
            ${ball('radial-gradient(#bbb,#999)', 'X')}<div style="width:1px"></div>`;
        }
    });

    define('ov-score', class extends OvElement {
        render() {
            const staff = y => [0, 8, 16, 24, 32].map(d => `<rect x="496" y="${y + d}" width="619" height="1" fill="#222"/>`).join('');
            const bars = [703, 860, 1016].map(x => `<rect x="${x}" y="326" width="1" height="111" fill="#222"/>`).join('');
            const rests = [621, 778, 935, 1091].map(x => rc(x, 334.500, 8, 3.500, '#111') + rc(x, 412.500, 8, 3.500, '#111')).join('');
            const brace = `<path d="M496 326.500C488 330 491 345 491 358c0 12-1 18-5 23 4 5 5 11 5 23 0 14-3 28 5 33-2-7-2-17-2-32 0-13-1-19-5-24 4-5 5-11 5-24 0-16 0-26 2-31z" fill="#111"/>`;
            const f = (s, x, y) => `<text x="${x}" y="${y}" font-family='"Liberation Serif", serif' font-weight="bold" font-size="23" text-anchor="middle" fill="#111">${s}</text>`;
            return `<style>
                :host { display: block; width: 823px; height: 377px; overflow: hidden; background: #f6f6f6; flex: none; }
            </style>` + svg(823, 377, `
                <defs><filter id="paper" x="0" y="0" width="100%" height="100%"><feTurbulence type="fractalNoise" baseFrequency=".09 .55" numOctaves="2" seed="4"/><feColorMatrix values="0 0 0 0 .5  0 0 0 0 .5  0 0 0 0 .5  .22 .22 0 0 -.18"/></filter></defs>
                <rect x="292" y="131" width="823" height="377" fill="#f8f8f8"/>
                <rect x="292" y="131" width="823" height="377" filter="url(#paper)"/>
                <text x="371.500" y="198" font-family='${CJK}' font-size="14" letter-spacing="2" fill="#c2c2c2" text-anchor="middle">[页眉]</text>
                <text x="762" y="211" font-family='${CJK}' font-size="28" letter-spacing="4" fill="#bebebe" text-anchor="middle">[标题]</text>
                <text x="370" y="274" font-family='${CJK}' font-size="13.500" letter-spacing="1.500" fill="#c2c2c2" text-anchor="middle">[要求]</text>
                <rect x="547" y="327" width="156" height="32" fill="#d8e2f2" opacity=".75"/>
                ${staff(326)}${staff(404)}${bars}${brace}${rests}
                <rect x="556" y="311" width="1" height="62" fill="#f77"/>
                <text x="501" y="310" font-family='"Liberation Serif", serif' font-size="10" fill="#222">1</text>
                <text x="362" y="491" font-family='"Liberation Serif", serif' font-size="10" fill="#222">5</text>
                <text x="387" y="385" font-family='"Liberation Serif", serif' font-size="14.300" fill="#111">Electric Piano</text>
                <text x="509" y="358" font-family='${MUSIC}' font-size="46" fill="#111" text-anchor="middle">&#x1D11E;</text>
                <text x="510" y="434" font-family='${MUSIC}' font-size="40" fill="#111" text-anchor="middle">&#x1D122;</text>
                ${f(4, 536, 342.500)}${f(4, 536, 358.500)}${f(4, 536, 420.500)}${f(4, 536, 436.500)}
                <rect x="356" y="507" width="759" height="1" fill="#222"/>
                <path d="M370 508c0-5 1-11 3-11s3 5 3 11h-1.500c0-4-.500-8-1.500-8s-1.500 4-1.500 8z" fill="#111"/>
                <rect x="587" y="506" width="1" height="2" fill="#222"/><rect x="782" y="506" width="1" height="2" fill="#222"/><rect x="939" y="506" width="1" height="2" fill="#222"/>
            `, '292 131 823 377');
        }
    });

    define('ov-scrollbar', class extends OvElement {
        render() {
            const v = this.hasAttribute('vertical');
            const btn = d => `<div class="btn">${svg(14, 14, v ? (d ? '<path d="M2 4h10l-5 8z" fill="#888"/>' : '<path d="M2 11h10L7 3z" fill="#888"/>') : (d ? '<path d="M4 2v10l8-5z" fill="#888"/>' : '<path d="M11 2v10L3 7z" fill="#888"/>'))}</div>`;
            return `<style>
                :host { display: flex; flex-direction: ${v ? 'column' : 'row'}; background: #2a2a2a; ${v ? 'width:15px;height:377px' : 'width:823px;height:17px'}; flex: none; }
                .btn { ${v ? 'height:19px' : 'width:20px'}; flex: none; display: flex; align-items: center; justify-content: center; background: ${v ? 'linear-gradient(90deg,#e4e4e4,#a0a0a0)' : 'linear-gradient(#d0d0d0,#888)'}; }
                .th { ${v ? 'height:104px' : 'width:340px'}; flex: none; background: ${v ? 'linear-gradient(90deg,#555,#b4b4b4 45%,#666)' : 'linear-gradient(#c8c8c8,#808080 50%,#505050)'}; }
                .sp { flex: 1; }
            </style>${btn(0)}<div class="th"></div><div class="sp"></div>${btn(1)}`;
        }
    });

    define('ov-strip', class extends OvElement {
        render() {
            const marks = this.attr('scale').split(',').map(s => s.split(':'));
            const top = +this.attr('fader-top');
            let prev = top;
            const labels = marks.map(m => {
                const mt = +m[1] - 5 - prev;
                prev = +m[1] + 5;
                return `<div class="lb" style="margin-top:${mt}px">${m[0]}<i></i></div>`;
            }).join('');
            const fx = this.attr('fx');
            const fxBtns = fx ? fx.split(',').map((f, i) => `<div class="fx" style="height:${i ? 14 : 12}px;margin-top:${i ? 3 : 0}px;line-height:${i ? 14 : 12}px">${f}</div>`).join('') : '';
            const btns = this.attr('btns').split(',').map(b => `<ov-sq w="17" h="17">${b}</ov-sq>`).join('');
            const h = +this.attr('fader-h');
            return `<style>
                :host { display: block; box-sizing: border-box; flex: none; width: ${this.attr('w')}px; height: ${this.attr('h')}px; background: linear-gradient(#6a6a6a, #444 60%, #3e3e3e); color: #aaa; font: 11px ${SERIF};
                    ${this.hasAttribute('selected') ? 'border: 1px solid #aaa; border-top: 0;' : ''} display: flex; flex-direction: column; align-items: center; }
                .fx { width: 72px; background: linear-gradient(#0a0a0a, #333 45%, #4a4a4a); color: #999; text-align: center; font: 9.500px ${SERIF}; flex: none; }
                .btns { display: flex; gap: 10px; margin-top: ${this.attr('btn-gap')}px; height: 17px; flex: none; }
                .pan { font: 10px/12px ${CJK}; color: #aaa; height: 12px; margin-top: 2px; flex: none; }
                .kn { position: relative; width: 50px; margin-top: 0; flex: none; display: flex; justify-content: center; }
                .kn span { position: absolute; top: 25px; font: 10px ${SERIF}; }
                .fs { display: flex; align-self: flex-start; height: ${h}px; margin-top: ${this.attr('fs-gap')}px; flex: none; }
                .sc { width: ${this.attr('scale-w')}px; height: ${h}px; flex: none; }
                .lb { height: 10px; line-height: 10px; text-align: right; padding-right: 1px; white-space: nowrap; }
                .lb i { display: inline-block; width: 3px; height: 1px; background: #aaa; margin-left: 2px; vertical-align: 3px; }
                .fd { width: 15px; position: relative; flex: none; }
                .fd .tr { position: absolute; left: 6px; top: 0; bottom: 0; width: 3px; background: #0c0c0c; border-radius: 2px; }
                .fd .th { position: absolute; left: 0; top: ${this.attr('thumb')}px; width: 15px; height: 19px; border-radius: 2px; box-sizing: border-box;
                    background: repeating-linear-gradient(#3c3c3c 0 2px, #2a2a2a 2px 3px); border: 1px solid #222; }
                .fd .th::after { content: ""; position: absolute; left: 2px; right: 2px; top: 7px; height: 2px; background: #eee; }
                .mt { width: 12px; height: ${h}px; margin-left: 10px; box-sizing: border-box; border-right: 1px solid #bbb; border-bottom: 1px solid #bbb; background: #000; display: flex; gap: 1px; padding: 2px 0 0 1px; flex: none; }
                .mt b { width: 4px; display: block; background: repeating-linear-gradient(transparent 0 2px, #0008 2px 3px), linear-gradient(#4a2e0a 0 13%, #6b5a0e 13% 49%, #3f6a14 49%); }
                .name { width: ${this.attr('name-w')}px; border-radius: 3px; text-align: center; flex: none; }
                .sel { height: 14px; margin-top: ${this.attr('name-gap')}px; background: #b01224; color: #eee; font: 10.800px/14px ${MONO}; }
                .bus { height: 16px; margin-top: ${this.attr('bus-gap')}px; background: #181818; color: #80c018; font: 12.500px/14px ${CJK}; }
            </style>
            ${fxBtns}
            <div class="btns">${btns}</div>
            <div class="pan">移动</div>
            <div class="kn"><ov-knob size="34"></ov-knob><span style="left:${this.attr('lr', 6)}px">L</span><span style="right:${this.attr('lr', 6)}px">R</span></div>
            <div class="fs">
                <div class="sc">${labels}</div>
                <div class="fd"><div class="tr"></div><div class="th"></div></div>
                <div class="mt"><b></b><b></b></div>
            </div>
            ${this.hasAttribute('sel') ? `<div class="name sel">${this.attr('sel')}</div>` : ''}
            <div class="name bus">${this.attr('bus')}</div>`;
        }
    });

    define('ov-mixer', class extends OvElement {
        render() {
            return `<style>
                :host { display: flex; flex: 1; align-items: flex-start; padding-left: 37px; background: linear-gradient(90deg, #282828 280px, #1d1d1d 280px); overflow: hidden; }
                .midi { display: flex; width: 99px; height: 11px; overflow: hidden; margin-left: 32px; flex: none; background: #444; border-radius: 0 0 3px 3px; font: 11px/4px ${MONO}; }
                .midi div { flex: 1; text-align: center; }
                .m { background: #f00; color: #300; flex: none; width: 49px; }
                .n { color: #777; background: linear-gradient(#444, #5a5a5a); }
            </style>
            <ov-strip w="88" h="299" btns="M" btn-gap="54" fader-top="125" fader-h="136" fs-gap="5" scale-w="36" thumb="19" name-w="82" name-gap="0" bus-gap="19" lr="6" bus="音频输出"
                scale="6:130,0:152,-6:175,-12:192,-18:205,-24:217,-36:236,-∞:253"></ov-strip>
            <div class="midi"><div class="m">MIDI</div><div class="n">声部</div></div>
            <ov-strip selected w="78" h="298" fx="Chorus,Modulation,Expression" btns="M,S" btn-gap="7" fader-top="123" fader-h="135" fs-gap="6" scale-w="30" thumb="26" name-w="72" name-gap="4" bus-gap="2" lr="5" sel="Electric..." bus="主总线"
                scale="127:128,112:144,96:159,80:174,64:189,48:205,32:220,16:235,0:251" style="margin-left:29px"></ov-strip>`;
        }
    });

    define('ov-check', class extends OvElement {
        render() {
            const on = this.hasAttribute('checked');
            const latin = this.hasAttribute('latin');
            return `<style>
                :host { display: flex; align-items: center; height: 20px; color: #c8c8c8; font: 15px ${CJK}; white-space: pre; }
                .b { width: 13px; height: 13px; box-sizing: border-box; border: 1px solid #e4e4e4; background: linear-gradient(#888, #444); box-shadow: inset 0 0 0 1px #333; margin-right: 3px; flex: none; }
                .l { font: ${latin ? '12.500px ' + MONO : '15px ' + CJK}; transform: translateY(${latin ? 1 : -2}px); display: block; }
            </style>
            <div class="b">${on ? svg(11, 11, '<path d="M2 5.500l2.500 3L9 2" fill="none" stroke="#eee" stroke-width="1.800"/>') : ''}</div>
            <span class="l"><slot></slot></span>`;
        }
    });

    define('ov-radio', class extends OvElement {
        render() {
            const on = this.hasAttribute('checked');
            return `<style>
                :host { display: flex; align-items: center; height: 20px; color: #c8c8c8; font: 12.500px ${MONO}; white-space: pre; }
                .r { width: 13px; height: 13px; box-sizing: border-box; border-radius: 50%; border: 1px solid #ddd; background: ${on ? 'radial-gradient(#fff 55%, #666 60%)' : 'radial-gradient(#aaa 20%, #666 60%)'}; margin-right: 3px; flex: none; }
                .l { display: block; transform: translateY(1px); }
            </style><div class="r"></div><span class="l"><slot></slot></span>`;
        }
    });

    define('ov-box', class extends OvElement {
        render() {
            return `<style>
                :host { display: block; box-sizing: border-box; width: 264px; margin-left: 6px; height: ${this.attr('h')}px; border: 2px solid #5e5e5e; border-radius: 6px; background: #444; padding: 3px 0 0 4px; position: relative; }
            </style><slot></slot>`;
        }
    });

    define('ov-style-pane', class extends OvElement {
        render() {
            const sub = ['风格', '字体地图', '时间代码', '背景'];
            const widths = [55, 65, 65, 55];
            return `<style>
                :host { display: flex; flex-direction: column; flex: 1; background: #262626; padding: 8px 0 0 7px; box-sizing: border-box; color: #c8c8c8; }
                .subs { display: flex; gap: 1px; height: 23px; flex: none; }
                .subs div { text-align: center; font: 13px/21px ${CJK}; border-radius: 3px 3px 0 0; background: linear-gradient(#333, #050505); color: #999; }
                .subs div.on { background: linear-gradient(#6e6e6e, #4e4e4e); color: #ddd; }
                .body { width: 280px; margin-left: 4px; height: 387px; box-sizing: border-box; background: #525252; border-radius: 3px; padding-top: 5px; }
                .cap { font: 13px/18px ${CJK}; margin-left: 11px; height: 18px; color: #ccc; }
                hr { border: 0; height: 1px; background: #a8a8a8; margin: 7px 4px 9px 0; width: 250px; }
                .btn { position: absolute; left: 144px; top: 15px; width: 100px; height: 20px; box-sizing: border-box; border: 1px solid #000; border-radius: 3px; background: linear-gradient(#666, #3a3a3a); text-align: center; font: 13px/18px ${CJK}; color: #bbb; }
            </style>
            <div class="subs">${sub.map((s, i) => `<div class="${i ? '' : 'on'}" style="width:${widths[i]}px">${s}</div>`).join('')}</div>
            <div class="body">
                <div class="cap">音乐字体</div>
                <ov-box h="67">
                    <ov-radio checked>Aloisen</ov-radio>
                    <ov-radio>Aloisen Groove</ov-radio>
                    <div class="btn">设置...</div>
                </ov-box>
                <div class="cap" style="margin-top:3px">显示</div>
                <ov-box h="267">
                    <ov-check checked>段尾双小节</ov-check>
                    <ov-check>左分离系统</ov-check>
                    <ov-check>右边系统分离</ov-check>
                    <ov-check>小册子的横向页面</ov-check>
                    <ov-check checked latin>Symbols in colo:</ov-check>
                    <ov-check>小节里的中心单个音符</ov-check>
                    <hr>
                    <ov-check checked>用全休止符清空小节</ov-check>
                    <ov-check>右对齐音轨名称</ov-check>
                    <ov-check>显示组名称</ov-check>
                    <ov-check>在曲目名称记号降低</ov-check>
                    <ov-check latin> Draw repeats as winged repeats</ov-check>
                    <ov-check checked>在主乐谱上打印提示音符</ov-check>
                </ov-box>
            </div>`;
        }
    });

    define('ov-app', class extends OvElement {
        render() {
            const closed = ['首饰', '力度符号', '五线谱', '谱号', '图形', '磁头', '吉它', '爵士乐'];
            return `<style>
                :host { display: flex; flex-direction: column; width: 1440px; height: 856px; overflow: hidden; background: #262626; }
                .main { display: flex; flex: 1; min-height: 0; }
                .left { width: 280px; flex: none; box-sizing: border-box; border-left: 1px solid #999; display: flex; flex-direction: column; background: #272727; }
                .left ov-tabs { margin-right: 2px; }
                .stack { display: flex; flex-direction: column; gap: 7px; padding: 7px 0 0 7px; width: 261px; }
                .center { width: 856px; flex: none; box-sizing: border-box; border-left: 2px solid #a8a8a8; border-right: 2px solid #a8a8a8; display: flex; flex-direction: column; }
                .paper { display: flex; flex-wrap: wrap; height: 406px; box-sizing: border-box; padding: 10px 0 0 10px; background: #4e4e4e; flex: none; align-content: flex-start; }
                .paper .gap { width: 1px; background: #2a2a2a; }
                .split { height: 10px; flex: none; background: linear-gradient(#3a3a3a, #8c8c8c 55%, #a8a8a8); }
                .right { flex: 1; box-sizing: border-box; border-left: 2px solid #a8a8a8; margin-left: 1px; border-right: 2px solid #a8a8a8; margin-right: 2px; display: flex; flex-direction: column; background: #262626; }
            </style>
            <ov-titlebar></ov-titlebar>
            <ov-menubar></ov-menubar>
            <ov-toolbar></ov-toolbar>
            <div class="main">
                <div class="left">
                    <ov-tabs tabs="符号|文本|和弦|歌词:"></ov-tabs>
                    <div class="stack">
                        <ov-panel title="混合器" h="86"><ov-mixer-head></ov-mixer-head></ov-panel>
                        <ov-panel title="音符" h="166" selected><ov-palette set="notes" active="3" noedge><ov-note-foot></ov-note-foot></ov-palette></ov-panel>
                        <ov-panel title="群体" h="82"><ov-palette set="groups"></ov-palette></ov-panel>
                        <ov-panel title="记号" h="138"><ov-palette set="marks"></ov-palette></ov-panel>
                        ${closed.map(t => `<ov-panel title="${t}" collapsed></ov-panel>`).join('')}
                    </div>
                </div>
                <div class="center">
                    <ov-ruler></ov-ruler>
                    <div class="paper">
                        <ov-score></ov-score><div class="gap"></div><ov-scrollbar vertical></ov-scrollbar>
                        <ov-scrollbar style="margin-top:1px"></ov-scrollbar>
                    </div>
                    <div class="split"></div>
                    <ov-mixer></ov-mixer>
                </div>
                <div class="right">
                    <ov-tabs tabs="乐谱|活动小节|雕刻机"></ov-tabs>
                    <ov-style-pane></ov-style-pane>
                </div>
            </div>`;
        }
    });
})();
</script>
</body>
</html>
